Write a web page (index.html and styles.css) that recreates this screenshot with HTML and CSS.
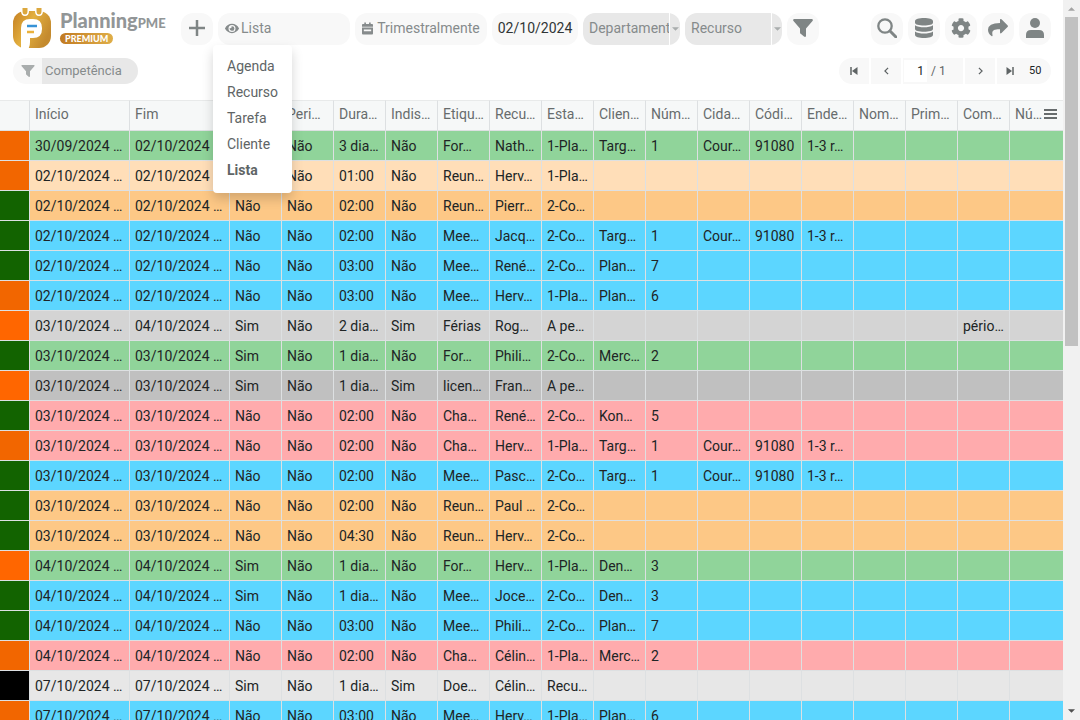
FILE: index.html
```html
<!DOCTYPE html>
<html lang="pt">
<head>
<meta charset="utf-8">
<title>PlanningPME</title>
<link rel="stylesheet" href="styles.css">
</head>
<body>
<div class="page">
<header class="head">
  <div class="bar">
    <a class="logo" href="#" aria-label="PlanningPME Premium">
      <svg class="logo-mark" viewBox="0 0 38 40" width="38" height="40" aria-hidden="true">
        <defs><linearGradient id="gold" x1="0" y1="0" x2="1" y2="0.5"><stop offset="0" stop-color="#c47f22"/><stop offset=".5" stop-color="#e3b040"/><stop offset="1" stop-color="#c48a2e"/></linearGradient></defs>
        <rect x="0" y="3" width="38" height="37" rx="12" fill="url(#gold)"/>
        <path d="M8 41V20Q8 11 17 11H20Q29 11 29 20V21Q29 30 20 30H17V34Q17 39 15 41Z" fill="#fff"/>
        <path d="M8 0v3q0 5 4 5t4-5V0z M22 0v3q0 5 4 5t4-5V0z" fill="#fff"/>
        <path d="M9.500 0v3q0 3.500 2.500 3.500t2.500-3.500V0z M23.500 0v3q0 3.500 2.500 3.500t2.500-3.500V0z" fill="#dca83e"/>
        <path d="M14 18h10" stroke="#3793d6" stroke-width="2.500"/>
        <path d="M14 24h7" stroke="#eab23c" stroke-width="2.500"/>
      </svg>
      <span class="logo-text">
        <span class="logo-name">Planning<span class="logo-pme">PME</span></span>
        <span class="logo-tag">PREMIUM</span>
      </span>
    </a>
    <div class="tools">
      <button class="round" aria-label="Adicionar"><svg viewBox="0 0 16 16" width="16" height="16"><path d="M8 0v16M0 8h16" stroke="currentColor" stroke-width="2.500"/></svg></button>
      <div class="view">
        <button class="pill view-button" aria-haspopup="menu" aria-expanded="true">
          <svg viewBox="0 0 576 512" width="14" height="13"><path fill="currentColor" d="M573 241C518 136 411 64 288 64S58 136 3 241a32 32 0 0 0 0 30c55 105 162 177 285 177s230-72 285-177a32 32 0 0 0 0-30zM288 400a144 144 0 1 1 144-144 144 144 0 0 1-144 144zm0-240a95 95 0 0 0-25 4 48 48 0 0 1-67 67 96 96 0 1 0 92-71z"/></svg>Lista</button>
        <div class="menu" role="menu">
          <button role="menuitem">Agenda</button>
          <button role="menuitem">Recurso</button>
          <button role="menuitem">Tarefa</button>
          <button role="menuitem">Cliente</button>
          <button role="menuitem" class="current">Lista</button>
        </div>
      </div>
      <button class="pill period"><svg viewBox="0 0 12 13" width="11" height="13"><path fill="currentColor" d="M2.500 0h1.800v1.500h3.400V0h1.800v1.500H11q1 0 1 1V4.500H0v-2q0-1 1-1h1.500zM0 5.500h12V12q0 1-1 1H1q-1 0-1-1zM2 7.500v2h8v-2z"/></svg>Trimestralmente</button>
      <input class="pill date" type="text" value="02/10/2024" aria-label="Data">
      <div class="combo"><input type="text" placeholder="Departamento" aria-label="Departamento"><button aria-label="Abrir departamentos"><svg viewBox="0 0 8 4" width="7" height="4"><path d="M0 0h8L4 4z" fill="currentColor"/></svg></button></div>
      <div class="combo"><input type="text" placeholder="Recurso" aria-label="Recurso"><button aria-label="Abrir recursos"><svg viewBox="0 0 8 4" width="7" height="4"><path d="M0 0h8L4 4z" fill="currentColor"/></svg></button></div>
      <button class="round" aria-label="Filtrar"><svg viewBox="0 0 20 18" width="20" height="18"><path d="M1 0h18q1.500.500.500 2L13 9.500V17q-.500 1.500-2 .500l-3-2.500q-1-.500-1-1.500v-4L.500 2Q-.500.500 1 0z" fill="currentColor"/></svg></button>
    </div>
    <div class="actions">
      <button class="round" aria-label="Pesquisar"><svg viewBox="0 0 20 20" width="20" height="20"><circle cx="8" cy="8" r="6.700" fill="none" stroke="currentColor" stroke-width="2.300"/><path d="M13 13l6 6" stroke="currentColor" stroke-width="3" stroke-linecap="round"/></svg></button>
      <button class="round" aria-label="Dados"><svg viewBox="0 0 18 20" width="18" height="20"><path fill="currentColor" d="M0 3C0 1.300 4 0 9 0s9 1.300 9 3v1.700C18 6.400 14 7.500 9 7.500S0 6.400 0 4.700zM0 7.300C2 8.700 5.500 9.300 9 9.300s7-.600 9-2V11c0 1.700-4 2.800-9 2.800S0 12.700 0 11zM0 13.500c2 1.400 5.500 2 9 2s7-.600 9-2V17c0 1.700-4 3-9 3s-9-1.300-9-3z"/></svg></button>
      <button class="round" aria-label="Definições"><svg viewBox="0 0 512 512" width="20" height="20"><path fill="currentColor" d="M487.400 315.700l-42.600-24.600c4.300-23.200 4.300-47 0-70.200l42.600-24.600c4.900-2.800 7.100-8.600 5.500-14-11.100-35.600-30-67.800-54.700-94.600-3.800-4.100-10-5.100-14.800-2.300L380.800 110c-17.900-15.400-38.500-27.300-60.800-35.100V25.800c0-5.600-3.900-10.500-9.400-11.700-36.700-8.200-74.300-7.800-109.200 0-5.500 1.200-9.400 6.100-9.400 11.700V75c-22.200 7.900-42.800 19.800-60.800 35.100L88.700 85.500c-4.900-2.800-11-1.900-14.800 2.300-24.700 26.700-43.600 58.900-54.700 94.600-1.700 5.400.600 11.200 5.500 14L67.300 221c-4.300 23.200-4.300 47 0 70.200l-42.600 24.600c-4.900 2.800-7.100 8.600-5.500 14 11.100 35.600 30 67.800 54.700 94.600 3.800 4.100 10 5.100 14.800 2.300l42.600-24.600c17.900 15.400 38.500 27.300 60.800 35.100v49.200c0 5.600 3.900 10.500 9.400 11.700 36.700 8.200 74.300 7.800 109.200 0 5.500-1.200 9.400-6.100 9.400-11.700v-49.200c22.200-7.900 42.800-19.800 60.800-35.100l42.600 24.600c4.900 2.800 11 1.900 14.800-2.300 24.700-26.700 43.600-58.900 54.700-94.600 1.500-5.500-.700-11.300-5.600-14.100zM256 336c-44.100 0-80-35.900-80-80s35.900-80 80-80 80 35.900 80 80-35.900 80-80 80z"/></svg></button>
      <button class="round" aria-label="Partilhar"><svg viewBox="0 0 20 18" width="20" height="18"><path fill="currentColor" d="M12 .8q.200-1.300 1.500-.500l6 6q.900.900 0 1.800l-6 6q-1.300.900-1.500-.500v-3.300C6 10.200 3.500 11.500 4.500 16q.200 1.700-1 1Q0 14.500 0 10.800 0 4.400 12 4.100z"/></svg></button>
      <button class="round" aria-label="Utilizador"><svg viewBox="0 0 18 20" width="18" height="20"><circle cx="9" cy="5" r="5" fill="currentColor"/><path d="M0 20v-3q0-5 5-5h8q5 0 5 5v3z" fill="currentColor"/></svg></button>
    </div>
  </div>
  <div class="bar sub">
    <div class="skill"><button aria-label="Filtrar por competência"><svg viewBox="0 0 20 18" width="14" height="12"><path d="M1 0h18q1.500.500.500 2L13 9.500V17q-.500 1.500-2 .500l-3-2.500q-1-.500-1-1.500v-4L.500 2Q-.500.500 1 0z" fill="currentColor"/></svg></button><input type="text" placeholder="Competência" aria-label="Competência"></div>
    <nav class="pager" aria-label="Paginação">
      <button aria-label="Primeira página"><svg viewBox="0 0 8 8" width="8" height="8"><path d="M1 0v8" stroke="currentColor" stroke-width="1.500"/><path d="M7.500 0v8L2 4z" fill="currentColor"/></svg></button>
      <button aria-label="Página anterior"><svg viewBox="0 0 6 10" width="5" height="8"><path d="M5 1L1 5l4 4" fill="none" stroke="currentColor" stroke-width="1.500"/></svg></button>
      <label class="page-no"><input type="text" value="1" aria-label="Página"><span>/ 1</span></label>
      <button aria-label="Página seguinte"><svg viewBox="0 0 6 10" width="5" height="8"><path d="M1 1l4 4-4 4" fill="none" stroke="currentColor" stroke-width="1.500"/></svg></button>
      <button class="last" aria-label="Última página"><svg viewBox="0 0 8 8" width="8" height="8"><path d="M7 0v8" stroke="currentColor" stroke-width="1.500"/><path d="M.5 0v8L6 4z" fill="currentColor"/></svg></button>
      <input class="size" type="text" value="50" aria-label="Linhas por página">
    </nav>
  </div>
</header>
<main>
<table class="grid">
<colgroup><col class="c-status"><col class="c-date"><col class="c-date"><col span="15" class="c-std"><col></colgroup>
<thead><tr><th></th><th>Início</th><th>Fim</th><th></th><th>Peri…</th><th>Dura…</th><th>Indis…</th><th>Etiqu…</th><th>Recu…</th><th>Esta…</th><th>Clien…</th><th>Núm…</th><th>Cida…</th><th>Códi…</th><th>Ende…</th><th>Nom…</th><th>Prim…</th><th>Com…</th><th><span class="last-head">Nú…<button aria-label="Colunas"><svg viewBox="0 0 13 10" width="13" height="10"><path d="M0 1h13M0 5h13M0 9h13" stroke="currentColor" stroke-width="2"/></svg></button></span></th></tr></thead>
<tbody>
<tr class="green planned"><td></td><td>30/09/2024 …</td><td>02/10/2024 …</td><td></td><td>Não</td><td>3 dia…</td><td>Não</td><td>For…</td><td>Nath…</td><td>1-Pla…</td><td>Targ…</td><td>1</td><td>Cour…</td><td>91080</td><td>1-3 r…</td><td></td><td></td><td></td><td></td></tr>
<tr class="peach planned"><td></td><td>02/10/2024 …</td><td>02/10/2024 …</td><td></td><td>Não</td><td>01:00</td><td>Não</td><td>Reun…</td><td>Herv…</td><td>1-Pla…</td><td></td><td></td><td></td><td></td><td></td><td></td><td></td><td></td><td></td></tr>
<tr class="orange confirmed"><td></td><td>02/10/2024 …</td><td>02/10/2024 …</td><td>Não</td><td>Não</td><td>02:00</td><td>Não</td><td>Reun…</td><td>Pierr…</td><td>2-Co…</td><td></td><td></td><td></td><td></td><td></td><td></td><td></td><td></td><td></td></tr>
<tr class="blue confirmed"><td></td><td>02/10/2024 …</td><td>02/10/2024 …</td><td>Não</td><td>Não</td><td>02:00</td><td>Não</td><td>Mee…</td><td>Jacq…</td><td>2-Co…</td><td>Targ…</td><td>1</td><td>Cour…</td><td>91080</td><td>1-3 r…</td><td></td><td></td><td></td><td></td></tr>
<tr class="blue confirmed"><td></td><td>02/10/2024 …</td><td>02/10/2024 …</td><td>Não</td><td>Não</td><td>03:00</td><td>Não</td><td>Mee…</td><td>René…</td><td>2-Co…</td><td>Plan…</td><td>7</td><td></td><td></td><td></td><td></td><td></td><td></td><td></td></tr>
<tr class="blue planned"><td></td><td>02/10/2024 …</td><td>02/10/2024 …</td><td>Não</td><td>Não</td><td>03:00</td><td>Não</td><td>Mee…</td><td>Herv…</td><td>1-Pla…</td><td>Plan…</td><td>6</td><td></td><td></td><td></td><td></td><td></td><td></td><td></td></tr>
<tr class="grey pending"><td></td><td>03/10/2024 …</td><td>04/10/2024 …</td><td>Sim</td><td>Não</td><td>2 dia…</td><td>Sim</td><td>Férias</td><td>Rog…</td><td>A pe…</td><td></td><td></td><td></td><td></td><td></td><td></td><td></td><td>pério…</td><td></td></tr>
<tr class="green confirmed"><td></td><td>03/10/2024 …</td><td>03/10/2024 …</td><td>Sim</td><td>Não</td><td>1 dia…</td><td>Não</td><td>For…</td><td>Phili…</td><td>2-Co…</td><td>Merc…</td><td>2</td><td></td><td></td><td></td><td></td><td></td><td></td><td></td></tr>
<tr class="dark-grey pending"><td></td><td>03/10/2024 …</td><td>03/10/2024 …</td><td>Sim</td><td>Não</td><td>1 dia…</td><td>Sim</td><td>licen…</td><td>Fran…</td><td>A pe…</td><td></td><td></td><td></td><td></td><td></td><td></td><td></td><td></td><td></td></tr>
<tr class="pink confirmed"><td></td><td>03/10/2024 …</td><td>03/10/2024 …</td><td>Não</td><td>Não</td><td>02:00</td><td>Não</td><td>Cha…</td><td>René…</td><td>2-Co…</td><td>Kon…</td><td>5</td><td></td><td></td><td></td><td></td><td></td><td></td><td></td></tr>
<tr class="pink planned"><td></td><td>03/10/2024 …</td><td>03/10/2024 …</td><td>Não</td><td>Não</td><td>02:00</td><td>Não</td><td>Cha…</td><td>Herv…</td><td>1-Pla…</td><td>Targ…</td><td>1</td><td>Cour…</td><td>91080</td><td>1-3 r…</td><td></td><td></td><td></td><td></td></tr>
<tr class="blue confirmed"><td></td><td>03/10/2024 …</td><td>03/10/2024 …</td><td>Não</td><td>Não</td><td>02:00</td><td>Não</td><td>Mee…</td><td>Pasc…</td><td>2-Co…</td><td>Targ…</td><td>1</td><td>Cour…</td><td>91080</td><td>1-3 r…</td><td></td><td></td><td></td><td></td></tr>
<tr class="orange confirmed"><td></td><td>03/10/2024 …</td><td>03/10/2024 …</td><td>Não</td><td>Não</td><td>02:00</td><td>Não</td><td>Reun…</td><td>Paul …</td><td>2-Co…</td><td></td><td></td><td></td><td></td><td></td><td></td><td></td><td></td><td></td></tr>
<tr class="orange confirmed"><td></td><td>03/10/2024 …</td><td>03/10/2024 …</td><td>Não</td><td>Não</td><td>04:30</td><td>Não</td><td>Reun…</td><td>Herv…</td><td>2-Co…</td><td></td><td></td><td></td><td></td><td></td><td></td><td></td><td></td><td></td></tr>
<tr class="green pending"><td></td><td>04/10/2024 …</td><td>04/10/2024 …</td><td>Sim</td><td>Não</td><td>1 dia…</td><td>Não</td><td>For…</td><td>Herv…</td><td>1-Pla…</td><td>Den…</td><td>3</td><td></td><td></td><td></td><td></td><td></td><td></td><td></td></tr>
<tr class="blue confirmed"><td></td><td>04/10/2024 …</td><td>04/10/2024 …</td><td>Sim</td><td>Não</td><td>1 dia…</td><td>Não</td><td>Mee…</td><td>Joce…</td><td>2-Co…</td><td>Den…</td><td>3</td><td></td><td></td><td></td><td></td><td></td><td></td><td></td></tr>
<tr class="blue confirmed"><td></td><td>04/10/2024 …</td><td>04/10/2024 …</td><td>Não</td><td>Não</td><td>03:00</td><td>Não</td><td>Mee…</td><td>Phili…</td><td>2-Co…</td><td>Plan…</td><td>7</td><td></td><td></td><td></td><td></td><td></td><td></td><td></td></tr>
<tr class="pink planned"><td></td><td>04/10/2024 …</td><td>04/10/2024 …</td><td>Não</td><td>Não</td><td>02:00</td><td>Não</td><td>Cha…</td><td>Célin…</td><td>1-Pla…</td><td>Merc…</td><td>2</td><td></td><td></td><td></td><td></td><td></td><td></td><td></td></tr>
<tr class="light refused"><td></td><td>07/10/2024 …</td><td>07/10/2024 …</td><td>Sim</td><td>Não</td><td>1 dia…</td><td>Sim</td><td>Doe…</td><td>Célin…</td><td>Recu…</td><td></td><td></td><td></td><td></td><td></td><td></td><td></td><td></td><td></td></tr>
<tr class="blue planned"><td></td><td>07/10/2024 …</td><td>07/10/2024 …</td><td>Não</td><td>Não</td><td>03:00</td><td>Não</td><td>Mee…</td><td>Herv…</td><td>1-Pla…</td><td>Plan…</td><td>6</td><td></td><td></td><td></td><td></td><td></td><td></td><td></td></tr>
</tbody>
</table>
</main>
</div>
<div class="scroll" aria-hidden="true">
  <svg class="up" viewBox="0 0 8 4" width="7" height="4"><path d="M0 4h8L4 0z"/></svg>
  <div class="track"><div class="thumb"></div></div>
  <svg viewBox="0 0 8 4" width="7" height="4"><path d="M0 0h8L4 4z"/></svg>
</div>
</body>
</html>
```
FILE: styles.css
```css
* { box-sizing: border-box; }
body {
  margin: 0;
  height: 100vh;
  overflow: hidden;
  display: flex;
  background: #fff;
  font: 14px/20px Roboto, "Liberation Sans", sans-serif;
  color: #202425;
}
button, input { font: inherit; color: inherit; border: 0; margin: 0; padding: 0; background: none; outline: 0; }
button { display: flex; align-items: center; justify-content: center; }
input { min-width: 0; }
input::placeholder { color: #868b8c; opacity: 1; }

.page { flex: 1; min-width: 0; overflow: hidden; }
.head { padding: 13px 12px 16px 13px; display: flex; flex-direction: column; gap: 13px; }
.bar { display: flex; justify-content: space-between; height: 32px; }
.sub { height: 26px; }

.logo { display: flex; align-items: center; gap: 9px; width: 163px; padding-bottom: 2px; text-decoration: none; color: #929697; }
.logo-mark { flex: none; }
.logo-text { display: flex; flex-direction: column; align-items: flex-start; padding-bottom: 3px; font-family: Lato, sans-serif; }
.logo-name { font-size: 20px; font-weight: 900; line-height: 20px; }
.logo-pme { font-size: 13px; }
.logo-tag {
  padding: 0 5px;
  border-radius: 6px;
  background: linear-gradient(90deg, #c17a22, #dfae48);
  color: #fff;
  font-size: 9px;
  font-weight: 900;
  line-height: 11px;
}

.tools, .actions { display: flex; gap: 5px; color: #868b8c; }
.tools { flex: 1; margin-left: 5px; }
.round { width: 32px; height: 32px; padding-bottom: 2px; border-radius: 12px; background: #f8f8f8; color: #7f8585; }
.pill { height: 32px; padding-bottom: 2px; border-radius: 12px; background: #f8f8f8; }
.view { position: relative; }
.view-button { width: 132px; justify-content: flex-start; gap: 2px; padding-left: 7px; }
.period { width: 132px; gap: 4px; }
.date { width: 86px; text-align: center; color: #303536; }
.menu {
  position: absolute;
  z-index: 2;
  top: 32px;
  left: -5px;
  padding: 8px 14px 10px;
  background: #fff;
  border-radius: 4px;
  box-shadow: 0 6px 12px rgba(0, 0, 0, .17);
  color: #606566;
}
.menu button { height: 26px; }
.menu .current { font-weight: 700; }
.combo { display: flex; gap: 1px; width: 97px; border-radius: 12px; overflow: hidden; }
.combo input { flex: 1; padding: 0 0 2px 6px; background: #e8e8e8; }
.combo button { width: 10px; background: #e8e8e8; color: #a9adad; }

.skill { display: flex; width: 125px; border-radius: 13px; overflow: hidden; font-size: 13px; }
.skill button { width: 29px; background: #f8f8f8; color: #a9adad; }
.skill input { flex: 1; padding-left: 3px; background: #e8e8e8; }
.pager { display: flex; gap: 2px; border-radius: 13px; overflow: hidden; font-size: 12px; color: #5f6465; }
.pager > * { background: #f8f8f8; }
.pager button { width: 30px; }
.page-no { display: flex; align-items: center; width: 60px; padding-left: 1px; gap: 4px; }
.page-no input { width: 23px; height: 22px; padding-right: 3px; text-align: right; background: #fff; color: #202425; }
.pager .last { width: 26px; margin-right: -2px; }
.size { width: 28px; padding-left: 6px; font-size: 11px; color: #202425; }

.grid { width: 100%; table-layout: fixed; border-collapse: separate; border-spacing: 0; }
.c-status { width: 30px; }
.c-date { width: 100px; }
.c-std { width: 52px; }
th, td {
  height: 30px;
  padding: 0 0 0 5px;
  border-right: 1px solid #dde0e2;
  border-bottom: 1px solid #dde0e2;
  text-align: left;
  white-space: nowrap;
  overflow: hidden;
}
th { height: 31px; padding-bottom: 4px; background: #f6f8f8; color: #676c6d; font-weight: 400; border-top: 1px solid #e8eaea; }
th:last-child, td:last-child { border-right: 0; }
.last-head { display: flex; align-items: center; gap: 2px; }
.green { background: #90d49a; }
.peach { background: #ffdeb8; }
.orange { background: #fdc886; }
.blue { background: #5cd6ff; }
.grey { background: #d4d4d4; }
.dark-grey { background: #c0c0c0; }
.pink { background: #ffabad; }
.light { background: #e7e7e7; }
.planned td:first-child { background: #f26600; }
.pending td:first-child { background: #ff6600; }
.confirmed td:first-child { background: #126300; }
.refused td:first-child { background: #000; }

.scroll { width: 17px; padding: 7px 0; display: flex; flex-direction: column; align-items: center; gap: 6px; background: #f1f1f1; fill: #505050; }
.up { fill: #a3a3a3; }
.track { flex: 1; width: 13px; }
.thumb { height: 48%; background: #c1c1c1; }
```
